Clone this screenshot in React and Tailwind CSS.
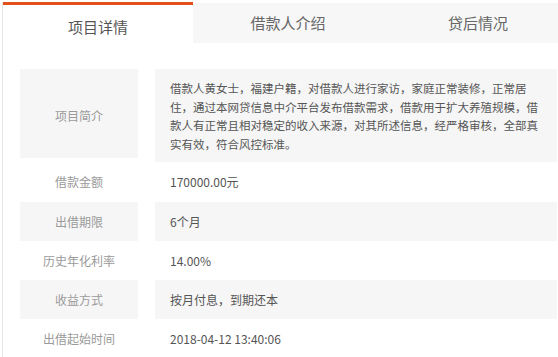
import React from 'react';

const tabs = ['项目详情', '借款人介绍', '贷后情况'];

const rows = [
  { label: '借款金额', value: '170000.00元', shaded: false, h: 'h-[40px]' },
  { label: '出借期限', value: '6个月', shaded: true, h: 'h-[39px]' },
  { label: '历史年化利率', value: '14.00%', shaded: false, h: 'h-[39px]' },
  { label: '收益方式', value: '按月付息，到期还本', shaded: true, h: 'h-[39px]' },
  { label: '出借起始时间', value: '2018-04-12 13:40:06', shaded: false, h: 'h-[39px]' },
];

const Row = ({ label, value, shaded, h }) => (
  <div className={`grid grid-cols-[118px_1fr] gap-x-[17px] ${h}`}>
    <div className={`flex items-center justify-center text-[12px] text-[#9a9a9a] ${shaded ? 'bg-[#f6f6f6]' : ''}`}>
      {label}
    </div>
    <div className={`flex items-center px-[15px] text-[12px] text-[#555] ${shaded ? 'bg-[#f6f6f6]' : ''}`}>
      {value}
    </div>
  </div>
);

export default function App() {
  return (
    <div className="w-[558px] h-[357px] overflow-hidden bg-white pl-[2px] pt-[2px] font-['Noto_Sans_CJK_SC',sans-serif]">
      <div className="h-full border-l border-[#e6e6e6]">
        {/* tabs */}
        <div className="flex h-[42px]">
          {tabs.map((t, i) =>
            i === 0 ? (
              <div
                key={t}
                className="w-[190px] shrink-0 border-t-[3px] border-[#e4501c] bg-white flex items-center justify-center pt-[5px] text-[15px] text-[#555]"
              >
                {t}
              </div>
            ) : (
              <div
                key={t}
                className="w-[190px] shrink-0 mt-[1px] h-[40px] bg-[#f7f7f7] flex items-center justify-center text-[15px] text-[#666]"
              >
                {t}
              </div>
            )
          )}
        </div>

        {/* detail table */}
        <div className="pt-[25px] pl-[17px] pr-[1px]">
          <div className="grid grid-cols-[118px_1fr] gap-x-[17px] h-[93px]">
            <div className="h-[89px] bg-[#f6f6f6] flex items-center justify-center pt-[4px] text-[12px] text-[#9a9a9a]">
              项目简介
            </div>
            <div className="bg-[#f6f6f6] px-[15px] pt-[10px] text-[11.5px] leading-[18.5px] text-[#555]">
              借款人黄女士，福建户籍，对借款人进行家访，家庭正常装修，正常居住，通过本网贷信息中介平台发布借款需求，借款用于扩大养殖规模，借款人有正常且相对稳定的收入来源，对其所述信息，经严格审核，全部真实有效，符合风控标准。
            </div>
          </div>
          {rows.map((r) => (
            <Row key={r.label} {...r} />
          ))}
        </div>
      </div>
    </div>
  );
}
